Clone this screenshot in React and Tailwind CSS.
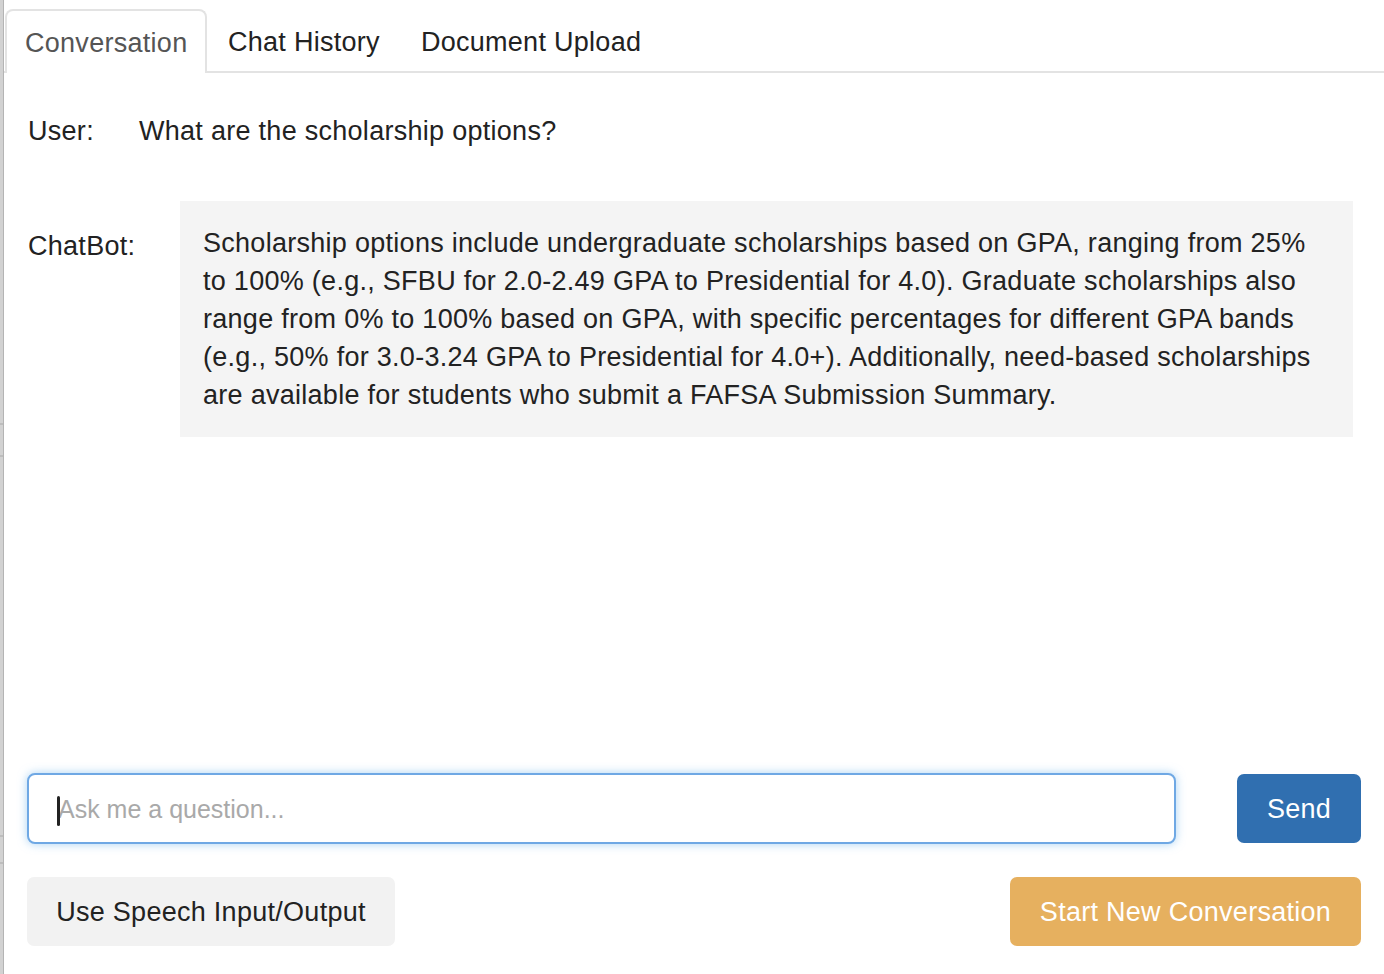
import React from "react";

export default function App() {
  return (
    <div
      className="flex h-[974px] w-[1384px] overflow-hidden bg-white text-[#222] tracking-[0.28px]"
      style={{ fontFamily: '"Liberation Sans", Arial, Helvetica, sans-serif' }}
    >
      {/* left window edge */}
      <div className="flex w-[4px] flex-col border-r border-[#b4b4b4] bg-[#d2d2d2]">
        <div className="h-[423px]" />
        <div className="h-[2px] bg-[#bdbdbd]" />
        <div className="h-[30px]" />
        <div className="h-[2px] bg-[#bdbdbd]" />
        <div className="h-[378px]" />
        <div className="h-[2px] bg-[#bdbdbd]" />
        <div className="h-[25px]" />
        <div className="h-[2px] bg-[#bdbdbd]" />
      </div>

      <div className="flex flex-1 flex-col">
        {/* tabs */}
        <div className="flex h-[73px] items-end border-b-2 border-[#e3e3e3] pl-[1px]">
          <div className="-mb-[2px] flex h-[64px] w-[202px] items-center rounded-t-[8px] border-2 border-b-0 border-[#e3e3e3] bg-white pl-[18px] pt-[2px] text-[27px] text-[#555]">
            Conversation
          </div>
          <div className="flex h-[58px] items-center pl-[21px] pr-[20px] text-[27px] text-[#222]">
            Chat History
          </div>
          <div className="flex h-[58px] items-center pl-[21px] text-[27px] text-[#222]">
            Document Upload
          </div>
        </div>

        {/* messages */}
        <div className="flex flex-col pl-[24px] pr-[31px]">
          <div className="mt-[39px] flex text-[27px] leading-[38px]">
            <div className="w-[111px]">User:</div>
            <div>What are the scholarship options?</div>
          </div>

          <div className="mt-[51px] flex text-[27px] leading-[38px]">
            <div className="w-[152px] pt-[26px]">ChatBot:</div>
            <div className="flex-1 bg-[#f4f4f4] px-[23px] py-[23px] text-[#222]">
              Scholarship options include undergraduate scholarships based on GPA, ranging from 25% to 100% (e.g., SFBU for 2.0-2.49 GPA to Presidential for 4.0). Graduate scholarships also range from 0% to 100% based on GPA, with specific percentages for different GPA bands (e.g., 50% for 3.0-3.24 GPA to Presidential for 4.0+). Additionally, need-based scholarships are available for students who submit a FAFSA Submission Summary.
            </div>
          </div>
        </div>

        <div className="flex-1" />

        {/* input row */}
        <div className="flex items-center pl-[23px] pr-[23px]">
          <div className="relative flex h-[71px] w-[1149px] items-center rounded-[8px] border-2 border-[#6fa8e4] bg-white pl-[29px] pt-[3px] shadow-[0_0_10px_rgba(102,175,233,0.55)]">
            <div className="absolute left-[28px] top-[21px] h-[30px] w-[3px] rounded-sm bg-[#222]" />
            <span className="text-[25px] tracking-normal text-[#a9a9a9]">Ask me a question...</span>
          </div>
          <div className="flex-1" />
          <div className="flex h-[69px] w-[124px] items-center justify-center rounded-[7px] bg-[#306fb0] pt-[1px] text-[27px] text-white">
            Send
          </div>
        </div>

        {/* bottom row */}
        <div className="mt-[33px] mb-[28px] flex items-center pl-[23px] pr-[23px]">
          <div className="flex h-[69px] w-[368px] items-center justify-center rounded-[7px] bg-[#f2f2f2] pt-[1px] text-[27px] text-[#222]">
            Use Speech Input/Output
          </div>
          <div className="flex-1" />
          <div className="flex h-[69px] w-[351px] items-center justify-center rounded-[7px] bg-[#e6b05f] pt-[1px] text-[27px] text-white">
            Start New Conversation
          </div>
        </div>
      </div>
    </div>
  );
}
